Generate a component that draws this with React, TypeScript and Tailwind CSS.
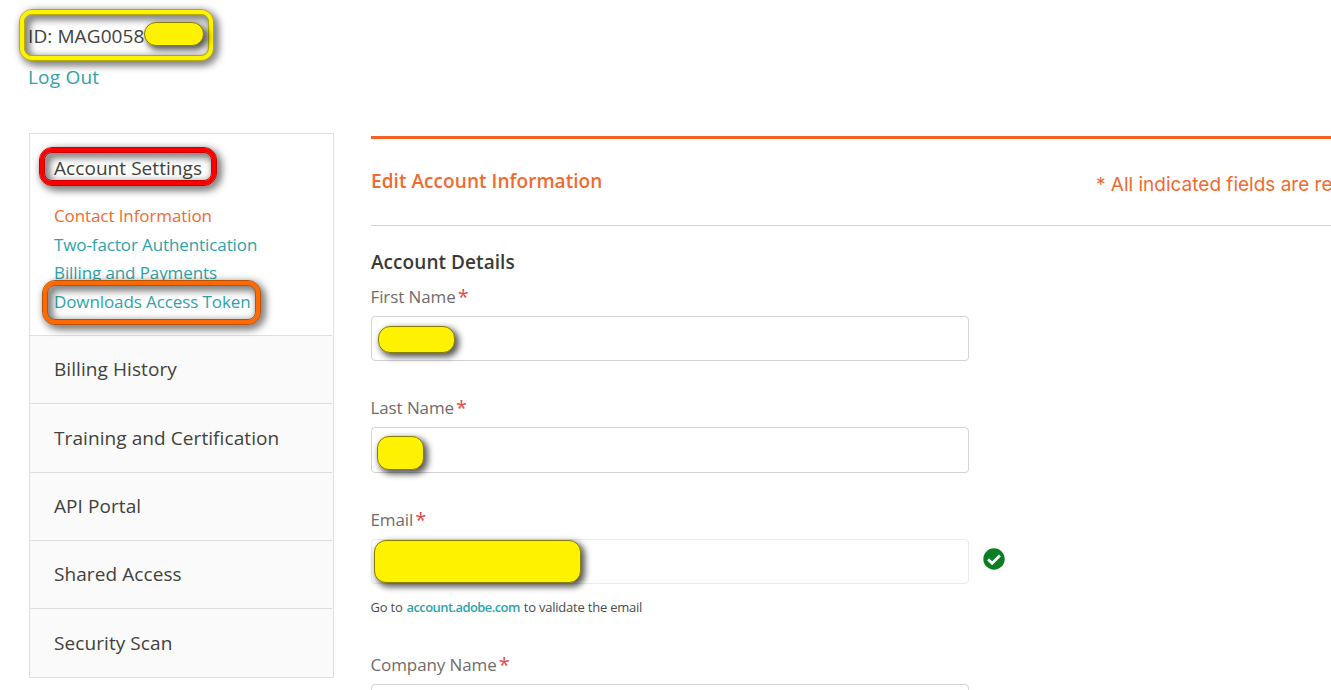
import type { ReactNode } from 'react';

const sections = [
  { label: 'Billing History', box: 'h-[68px] pt-[19px]' },
  { label: 'Training and Certification', box: 'h-[69px] pt-5' },
  { label: 'API Portal', box: 'h-[68px] pt-[19px]' },
  { label: 'Shared Access', box: 'h-[68px] pt-[19px]' },
  { label: 'Security Scan', box: 'h-[69px] pt-5' },
];

function Redaction({ className }: { className: string }) {
  return (
    <span
      className={`absolute border border-[#857e00] bg-[#fff200] shadow-[3px_3px_6px_1px_rgba(0,0,0,0.65)] ${className}`}
    />
  );
}

function Frame({ box, edge, fill }: { box: string; edge: string; fill: string }) {
  return (
    <span className={`pointer-events-none absolute drop-shadow-[3px_3px_4px_rgba(0,0,0,0.85)] ${box}`}>
      <span className={`block h-full w-full rounded-[13px] border ${edge}`}>
        <span className={`block h-full w-full rounded-[12px] border-4 ${fill}`}>
          <span className={`block h-full w-full rounded-[8px] border ${edge}`} />
        </span>
      </span>
    </span>
  );
}

function Label({ children, className }: { children: ReactNode; className: string }) {
  return (
    <label className={`-ml-[0.5px] flex h-6 text-[17px] leading-6 tracking-[-0.1px] text-[#716b6b] ${className}`}>
      {children}
      <span className="ml-[2px] text-[20px] leading-6 tracking-normal text-[#e54848]">*</span>
    </label>
  );
}

export default function App() {
  return (
    <div className="relative h-[690px] w-[1331px] overflow-hidden bg-white font-['Open_Sans',sans-serif] text-[#41413d]">
      <header className="flex h-[133px] flex-col items-start pl-[28px] pt-[22px] text-[19px] leading-7">
        <div className="relative tracking-[0.1px]">
          ID: MAG0058
          <Frame box="-left-[9px] -top-[13px] h-[52px] w-[195px]" edge="border-[#b5ac00]" fill="border-[#fff200]" />
          <Redaction className="left-[116px] top-0 h-6 w-[60px] rounded-[12px]" />
        </div>
        <a className="mt-[13px] text-[#2ea3a8] tracking-[0.2px]">Log Out</a>
      </header>

      <div className="flex items-start">
        <aside className="ml-[29px] h-[545px] w-[305px] shrink-0 border border-[#dfdfdf] bg-[#fafafa]">
          <div className="h-[201px] bg-white pl-6 pt-5">
            <div className="relative w-max text-[19px] leading-7 tracking-[0.06px]">
              Account Settings
              <Frame box="-left-[15px] -top-[7px] h-[39px] w-[178px]" edge="border-[#c80000]" fill="border-[#ff0000]" />
            </div>
            <nav className="mt-[20px] flex flex-col text-[17px] leading-[28.6px] tracking-[-0.1px] text-[#2ea3a8]">
              <a className="text-[#f26a30]">Contact Information</a>
              <a>Two-factor Authentication</a>
              <a>Billing and Payments</a>
              <a className="relative w-max">
                Downloads Access Token
                <Frame box="-left-[12px] -top-[8px] h-[45px] w-[219px]" edge="border-[#b85208]" fill="border-[#ff6a00]" />
              </a>
            </nav>
          </div>
          {sections.map((s) => (
            <div key={s.label} className={`mr-px border-t border-[#dfdfdf] pl-6 text-[19px] leading-7 tracking-[0.08px] ${s.box}`}>
              {s.label}
            </div>
          ))}
        </aside>

        <main className="ml-[37px] mt-[3px] w-[960px] shrink-0">
          <div className="flex h-[90px] justify-between border-b border-t-[3px] border-b-[#d4d4d4] border-t-[#f26322]">
            <h1 className="mt-7 text-[19px] font-semibold leading-7 tracking-[0.06px] text-[#f26a30]">Edit Account Information</h1>
            <p className="mt-[32px] w-[235px] overflow-hidden whitespace-nowrap font-[Inter,sans-serif] text-[19px] leading-7 text-[#f26a30]">* All indicated fields are required</p>
          </div>
          <h2 className="mt-[22px] text-[19px] font-semibold leading-7 tracking-[0.06px] text-[#3a3a38]">Account Details</h2>
          <Label className="mt-[9px]">First Name</Label>
          <div className="relative mt-[7px] h-[45px] w-[598px] rounded-[4px] border border-[#d3d3d3]">
            <Redaction className="left-[6px] top-[9px] h-[27px] w-[77px] rounded-[12px]" />
          </div>
          <Label className="mt-[35px]">Last Name</Label>
          <div className="relative mt-[7px] h-[46px] w-[598px] rounded-[4px] border border-[#d3d3d3]">
            <Redaction className="left-[5px] top-[8px] h-[34px] w-[47px] rounded-[12px]" />
          </div>
          <Label className="mt-[35px]">Email</Label>
          <div className="mt-[7px] flex items-center">
            <div className="relative h-[45px] w-[598px] rounded-[4px] border border-[#ebebeb]">
              <Redaction className="left-[2px] top-0 h-[43px] w-[207px] rounded-[12px]" />
            </div>
            <svg className="mb-[5px] ml-[14px] h-[22px] w-[22px]" viewBox="0 0 22 22" fill="none">
              <circle cx="11" cy="11" r="10.7" fill="#0b7d22" />
              <path d="m5.1 11.3 4 4 7.8-7.8" stroke="white" strokeWidth="2.7" />
            </svg>
          </div>
          <p className="-ml-[0.5px] mt-[13px] flex gap-[4px] text-[13px] leading-5 tracking-[-0.22px] text-[#4b4b4b]">
            <span>Go to</span>
            <a className="font-semibold tracking-[-0.58px] text-[#2ea3a8]">account.adobe.com</a>
            <span>to validate the email</span>
          </p>
          <Label className="mt-[36px]">Company Name</Label>
          <div className="mt-[7px] h-[45px] w-[598px] rounded-[4px] border border-[#d3d3d3]" />
        </main>
      </div>
    </div>
  );
}
